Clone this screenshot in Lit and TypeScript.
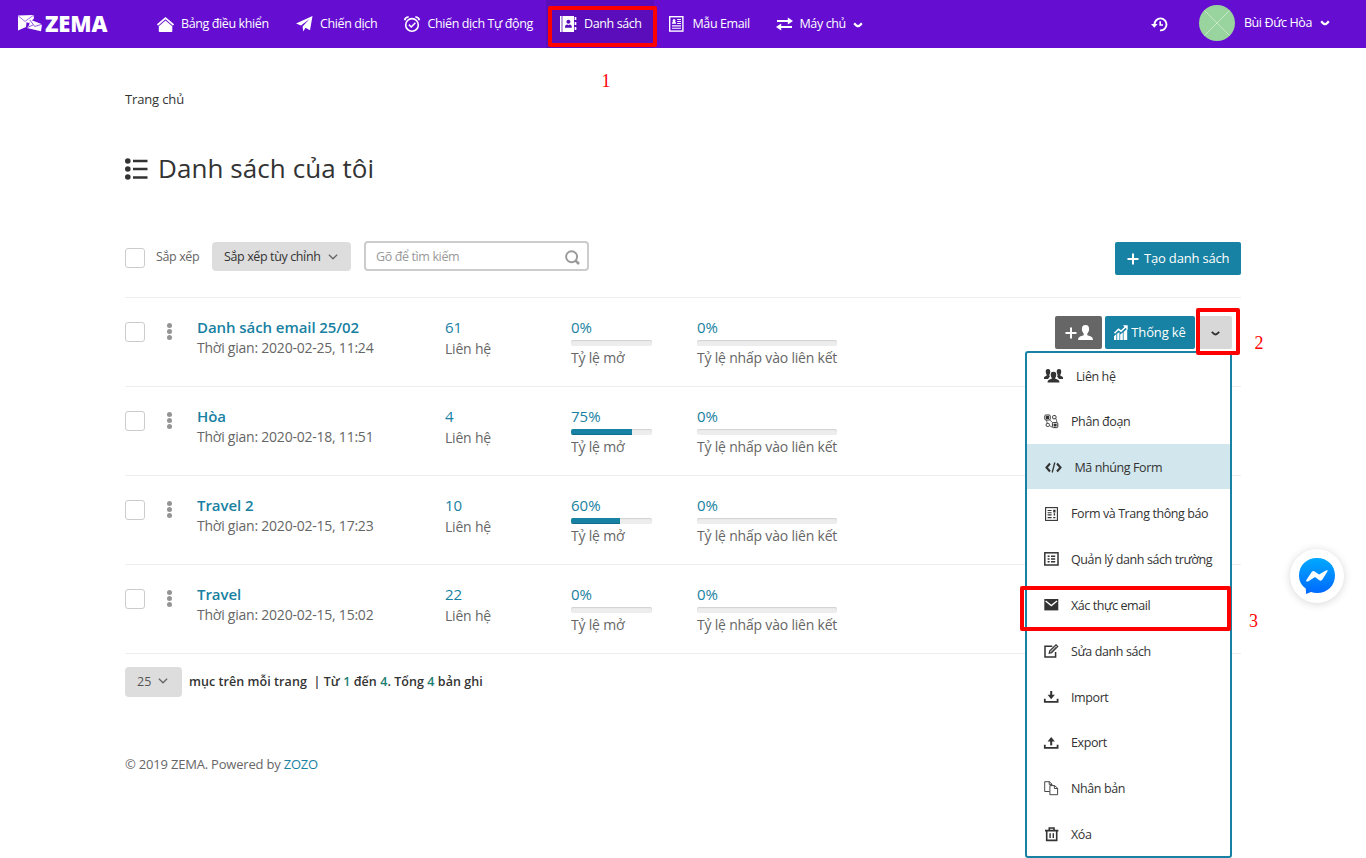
import { LitElement, html, css, svg } from "lit";
import { customElement, property } from "lit/decorators.js";
import { classMap } from "lit/directives/class-map.js";
import { styleMap } from "lit/directives/style-map.js";

const line = (d: string, w = 1.5) =>
  svg`<path d=${d} fill="none" stroke="currentColor" stroke-width=${w} />`;
const solid = (d: string) => svg`<path d=${d} fill="currentColor" fill-rule="evenodd" />`;

const glyphs: Record<string, { w: number; h: number; body: unknown }> = {
  logo: {
    w: 24, h: 17,
    body: svg`<path d="M0 .5 15.5 0 16 3.5 11 8 8.5 7.2 8 12 0 15.5Z" fill="#fff"/><path d="M.3 1 7 6.5 15.3.3" fill="none" stroke="#650dd1" stroke-width=".6"/><path d="M12 4.5 24 9.2 23 16.2 8.8 13 11.2 10Z" fill="#fff"/><path d="M11.8 5 16.7 11.4 24 9.3M9 12.6 15 10" fill="none" stroke="#650dd1" stroke-width=".7"/>`,
  },
  home: { w: 17, h: 15, body: svg`${solid("M8.5 3.6 15.3 9.3V14.2Q15.3 15 14.5 15H2.6Q1.8 15 1.8 14.2V9.3Z")}${line("M.5 8 8.5 1.2 16.5 8", 1.7)}` },
  plane: { w: 17, h: 16, body: solid("M16.5 0 14 14.2 9.5 11.7 7.2 15.5 6.6 10.6 13.5 3 5 9.6 0 7.6Z") },
  alarm: {
    w: 16, h: 16,
    body: svg`<circle cx="8" cy="8.9" r="6.3" fill="none" stroke="currentColor" stroke-width="1.6"/>${line("M4.9 8.6 7.3 11 11.4 6.7", 1.5)}${line("M.6 4.2Q1.3 1.2 4.6.9M15.4 4.2Q14.7 1.2 11.4.9", 1.6)}`,
  },
  book: {
    w: 17, h: 16,
    body: svg`${solid("M0 0H1.6V16H0ZM2.4 0H14V16H2.4ZM8.4 3.7a2 2 0 1 0 .01 0ZM5 11.7H11.8V10.4Q11.4 8.9 9.6 8.6L8.4 9.3 7.2 8.6Q5.4 8.9 5 10.4Z")}${solid("M14.6 1H16.3V4H14.6ZM14.6 6H16.3V9H14.6ZM14.6 11H16.3V14H14.6Z")}`,
  },
  news: {
    w: 15, h: 16,
    body: svg`<rect x=".7" y=".7" width="13.2" height="14.4" fill="none" stroke="currentColor" stroke-width="1.4"/>${line("M8.2 3.5H12M8.2 5.5H12M8.2 7.5H12M3 9.9H12M3 12.2H12", 1.1)}${solid("M3 7.8V6.6L4.2 5.9A1.5 1.5 0 1 1 5.9 5.9L7 6.6V7.8Z")}`,
  },
  swap: { w: 17, h: 14, body: svg`${line("M1 4H12.5M4.5 10H16", 2)}${solid("M11.8.4 17 4 11.8 7.6ZM5.2 6.4 0 10 5.2 13.6Z")}` },
  history: {
    w: 17, h: 15,
    body: svg`${line("M3.5 7.6A6 6 0 1 1 9 13.4", 1.9)}${line("M9.2 4.2V8H12", 1.6)}${solid("M0 7H6.6L3.3 10.8Z")}`,
  },
  caret: { w: 10, h: 6, body: line("M1.2 1.2Q3.6 4.2 5 4.2 6.4 4.2 8.8 1.2", 2.2) },
  down: { w: 9, h: 5, body: line("M.8.8Q3.4 3.5 4.5 3.5 5.6 3.5 8.2.8", 1.9) },
  thin: { w: 10, h: 6, body: line("M.9.8 5 4.8 9.1.8", 1.3) },
  list: {
    w: 23, h: 22,
    body: svg`<circle cx="2.8" cy="3" r="2.8" fill="currentColor"/><circle cx="2.8" cy="11" r="2.8" fill="currentColor"/><circle cx="2.8" cy="19" r="2.8" fill="currentColor"/>${line("M8 3H22.5M8 11H22.5M8 19.5H22.5", 2.4)}`,
  },
  search: { w: 15, h: 15, body: svg`<circle cx="6.6" cy="6.8" r="5.5" fill="none" stroke="currentColor" stroke-width="1.9"/>${line("M10.3 10.4 14 14", 2.6)}` },
  plus: { w: 12, h: 12, body: line("M6 .5V11.5M.5 6H11.5", 2) },
  person: { w: 15, h: 15, body: solid("M7.5 0C10.3 0 11.3 2 11.1 4.5 10.9 6.6 9.9 7.8 9.3 8.6V10.2L13 11.5Q15 12.2 15 15H0Q0 12.2 2 11.5L5.7 10.2V8.6C5.1 7.8 4.1 6.6 3.9 4.5 3.7 2 4.7 0 7.5 0Z") },
  stats: {
    w: 14, h: 15,
    body: svg`${solid("M0 11.2 2.4 9V15H0ZM3.2 8.6 5.4 7.2V15H3.2ZM6.2 9.4 8.8 7.4V15H6.2ZM9.6 7 13.2 3.8V15H9.6Z")}${line("M.5 8.2 4.5 4.3 7 6.2 12 1.5", 1.5)}${solid("M8.8.3H13.7V5Z")}`,
  },
  group: {
    w: 19, h: 14,
    body: svg`${solid("M4 0C6 0 6.5 1.5 6.2 3.4 6 4.7 5.4 5.3 5.3 6.5L6 7.3 4 10H0V9Q0 7.7 1 7.4L2.8 6.5C2.6 5.2 2 4.7 1.8 3.4 1.5 1.5 2 0 4 0ZM15 0C17 0 17.5 1.5 17.2 3.4 17 4.7 16.4 5.2 16.2 6.5L18 7.4Q19 7.7 19 9V10H15L13 7.3 13.7 6.5C13.6 5.3 13 4.7 12.8 3.4 12.5 1.5 13 0 15 0Z")}${solid("M9.5 2.8C12 2.8 12.5 4.5 12.2 6.4 12 7.8 11.2 8.5 11 9.6L14 10.7Q15.5 11.3 15.5 13.5H3.5Q3.5 11.3 5 10.7L8 9.6C7.8 8.5 7 7.8 6.8 6.4 6.5 4.5 7 2.8 9.5 2.8Z")}`,
  },
  segment: {
    w: 15, h: 15,
    body: svg`<g fill="none" stroke="currentColor" stroke-width="1"><rect x=".8" y="1" width="5.4" height="5" rx="1"/><rect x="8.6" y="1.6" width="3.4" height="3.2" rx="1"/><rect x="2.2" y="9.4" width="3.2" height="3" rx="1"/><rect x="8.4" y="8.6" width="5.4" height="5" rx="1"/><path d="M5.8 6 9 9M12 4.5 13 8.5M2.5 6 3.2 9.2M5.6 11.8 8.2 13.2" stroke-width=".7"/></g>${solid("M1.9 2.1H5V4.9H1.9ZM9.6 9.7H12.6V12.5H9.6Z")}`,
  },
  code: { w: 17, h: 11, body: svg`${line("M5 1.5 1.5 5.5 5 9.5M12 1.5 15.5 5.5 12 9.5", 2.1)}${line("M9.8.5 7.2 10.5", 1.3)}` },
  form: { w: 13, h: 14, body: svg`<rect x=".6" y=".6" width="11.8" height="12.8" fill="none" stroke="currentColor" stroke-width="1.1"/>${line("M2.6 3.5H6.6M2.6 5.7H6.6M2.6 7.9H6.6M2.6 10.6H6.6M8.2 10.6H10.4", 1.1)}${solid("M8.2 2.8H10.5V5.4H8.2ZM8.7 6.3H10.1V8.6H8.7Z")}` },
  fields: { w: 15, h: 14, body: svg`<rect x=".8" y=".8" width="13.2" height="12.2" fill="none" stroke="currentColor" stroke-width="1.5"/>${solid("M3.6 3.5H5.6V5.1H3.6ZM3.6 6.2H5.6V7.8H3.6ZM3.6 8.9H5.6V10.5H3.6Z")}${line("M7 4.3H11.2M7 7H11.2M7 9.7H11.2", 1.5)}` },
  mail: { w: 15, h: 12, body: svg`${solid("M.3 0H14.3V11.4H.3Z")}<path d="M1.6 2 7.3 6.6 13 2" fill="none" stroke="#fff" stroke-width="1.3"/>` },
  edit: { w: 15, h: 14, body: svg`${line("M8.3 2.2H1V13H11.6V8", 1.5)}${line("M5.2 9.3 5.8 6.8 12 .9 13.7 2.6 7.6 8.7Z", 1.2)}${line("M6.4 8.2 12 2.8", 0.8)}` },
  imp: { w: 15, h: 12, body: svg`${line("M.8 7.8V10.8H13.6V7.8", 1.8)}${line("M7.2 0V5", 2)}${solid("M3.6 3.8H10.8L7.2 8.2Z")}` },
  exp: { w: 15, h: 12, body: svg`${line("M.8 7.8V10.8H13.6V7.8", 1.8)}${line("M7.2 3V8.4", 2)}${solid("M3.6 4.4H10.8L7.2 0Z")}` },
  copy: { w: 15, h: 15, body: line("M5.5 10.5H.7V.7H5.3L8 3.2V4.3M5.2.7V3.4H8M5.9 4.6H10.6L13.6 7.2V13.7H5.9ZM10.4 4.6V7.5H13.6", 0.9) },
  trash: { w: 14, h: 15, body: svg`${line("M0 3.6H13.4M4.3 3.4V1H9V3.4M1.7 3.8V13.4H11.7V3.8", 1.6)}${line("M5.1 6.3V11M8.3 6.3V11", 1.4)}` },
};

@customElement("z-icon")
class ZIcon extends LitElement {
  @property() name = "";
  static styles = css`
    :host { display: inline-flex; flex: none; }
    svg { display: block; overflow: visible; }
  `;
  render() {
    const g = glyphs[this.name];
    return g
      ? html`<svg width=${g.w} height=${g.h} viewBox="0 0 ${g.w} ${g.h}">${g.body}</svg>`
      : null;
  }
}

@customElement("app-header")
class AppHeader extends LitElement {
  static styles = css`
    :host { display: flex; height: 48px; background: #650dd1; color: #fff; font-size: 12.5px; line-height: 46px; letter-spacing: -0.39px; }
    .brand { display: flex; align-items: center; width: 109px; padding: 0 18px; gap: 3px; }
    .brand z-icon { padding-bottom: 1px; }
    .word { padding-bottom: 1px; font: 800 22px/47px "Open Sans", sans-serif; letter-spacing: -0.1px; }
    .nav { display: grid; grid-template-columns: 139px 108px 154px 111px 107px 120px; }
    .item { display: flex; align-items: center; padding-left: 12px; white-space: nowrap; }
    .item z-icon:first-child { width: 24px; }
    .item.tight { padding-left: 11.5px; }
    .active { margin-right: 3px; padding-left: 14px; background: #5b0dbb; }
    .caret { margin-left: 7px; padding-top: 1px; }
    .user { display: flex; align-items: center; margin-left: auto; padding-right: 36px; line-height: 44px; }
    .user .caret { padding: 0 0 2px; margin-left: 8px; }
    .avatar { width: 36px; height: 36px; margin: 0 9px 2px 31px; }
    .who { padding-bottom: 2px; }
  `;
  render() {
    const items = [
      ["home", "Bảng điều khiển"],
      ["plane", "Chiến dịch"],
      ["alarm", "Chiến dịch Tự động"],
      ["book", "Danh sách"],
      ["news", "Mẫu Email"],
      ["swap", "Máy chủ"],
    ];
    return html`
      <div class="brand"><z-icon name="logo"></z-icon><span class="word">ZEMA</span></div>
      <nav class="nav">
        ${items.map(
          ([icon, label]) => html`<a class=${classMap({ item: true, active: icon === "book", tight: icon === "news" || icon === "swap" || icon === "alarm" })}>
            <z-icon name=${icon}></z-icon><span>${label}</span>
            ${icon === "swap" ? html`<z-icon class="caret" name="caret"></z-icon>` : null}
          </a>`
        )}
      </nav>
      <div class="user">
        <z-icon name="history"></z-icon>
        <svg class="avatar" viewBox="0 0 36 36">
          <circle cx="18" cy="18" r="18" fill="#99d49f" />
          <path d="M5.5 5.5 30.5 30.5M30.5 5.5 5.5 30.5" stroke="#c5e8c6" stroke-width="1" />
        </svg>
        <span class="who">Bùi Đức Hòa</span><z-icon class="caret" name="caret"></z-icon>
      </div>
    `;
  }
}

interface MailList { name: string; time: string; count: number; open: number; click: number; }

@customElement("list-row")
class ListRow extends LitElement {
  @property({ attribute: false }) data!: MailList;
  static styles = css`
    :host { display: grid; grid-template-columns: 41px 31px 248px 126px 126px 1fr; height: 88px; border-bottom: 1px solid #ededed; font-size: 14px; }
    .box { width: 18px; height: 18px; margin-top: 24px; border: 1px solid #ccc; border-radius: 3px; }
    .dots { display: flex; flex-direction: column; gap: 1px; padding: 24.5px 0 0 0.5px; }
    .dot { width: 5px; height: 5px; border-radius: 50%; background: #949494; }
    .col { padding-top: 18px; white-space: nowrap; }
    .name { color: #1881a2; font-size: 15px; line-height: 22px; font-weight: 600; letter-spacing: -0.07px; }
    .num { color: #1881a2; font-size: 15px; line-height: 22px; }
    .time { line-height: 19px; letter-spacing: -0.23px; }
    .sub { line-height: 21px; letter-spacing: -0.2px; }
    .bar { width: 81px; height: 6px; margin: 2px 0 0; border-radius: 2px; background: #ededed; box-shadow: inset 0 1px 1px rgba(0,0,0,.12); overflow: hidden; }
    .wide { width: 140px; }
    .fill { height: 100%; background: #1782a3; box-shadow: inset 0 -1px 0 rgba(0,0,0,.15); }
    .label { line-height: 24px; letter-spacing: -0.2px; }
  `;
  render() {
    const d = this.data;
    return html`
      <div class="box"></div>
      <div class="dots"><i class="dot"></i><i class="dot"></i><i class="dot"></i></div>
      <div class="col"><div class="name">${d.name}</div><div class="time">Thời gian: ${d.time}</div></div>
      <div class="col"><div class="num">${d.count}</div><div class="sub">Liên hệ</div></div>
      <div class="col"><div class="num">${d.open}%</div>
        <div class="bar"><div class="fill" style=${styleMap({ width: `${d.open}%` })}></div></div>
        <div class="label">Tỷ lệ mở</div></div>
      <div class="col"><div class="num">${d.click}%</div>
        <div class="bar wide"><div class="fill" style=${styleMap({ width: `${d.click}%` })}></div></div>
        <div class="label">Tỷ lệ nhấp vào liên kết</div></div>
    `;
  }
}

@customElement("action-menu")
class ActionMenu extends LitElement {
  static styles = css`
    :host { display: block; box-sizing: border-box; width: 207px; height: 507px; background: #fff; border: 2px solid #1782a3; border-radius: 3px; color: #333; font-size: 12.5px; letter-spacing: -0.4px; }
    .item { display: flex; box-sizing: border-box; height: 45px; align-items: center; padding: 2px 0 0 17px; margin-bottom: 0.87px; white-space: nowrap; }
    .item:first-child { height: 44.5px; }
    .item:last-child { margin-bottom: 0; }
    .hot { background: #d1e6ed; }
    .slot { display: flex; width: 27px; }
    .group .slot { width: 32px; }
    .code .slot { width: 30.5px; }
    .code z-icon { margin-left: 0.5px; }
    .form z-icon { margin-left: 1px; }
    .trash z-icon { margin-left: 0.5px; }
  `;
  render() {
    const items = [
      ["group", "Liên hệ"], ["segment", "Phân đoạn"], ["code", "Mã nhúng Form"],
      ["form", "Form và Trang thông báo"], ["fields", "Quản lý danh sách trường"],
      ["mail", "Xác thực email"], ["edit", "Sửa danh sách"], ["imp", "Import"],
      ["exp", "Export"], ["copy", "Nhân bản"], ["trash", "Xóa"],
    ];
    return html`${items.map(
      ([icon, label]) => html`<a class="item ${icon} ${icon === "code" ? "hot" : ""}">
        <span class="slot"><z-icon name=${icon}></z-icon></span><span>${label}</span></a>`
    )}`;
  }
}

@customElement("app-root")
class AppRoot extends LitElement {
  static styles = css`
    :host { display: block; position: relative; height: 858px; overflow: hidden; background: #fff; color: #666; font-family: "Open Sans", sans-serif; }
    .page { width: 1116px; padding-left: 125px; }
    .crumb { padding-top: 41px; font-size: 13px; line-height: 20px; letter-spacing: -0.14px; color: #333; }
    .heading { display: flex; align-items: center; gap: 10px; height: 40px; margin: 0; padding-top: 40px; color: #333; font-size: 26px; font-weight: 400; line-height: 40px; letter-spacing: 0.07px; }
    .heading span { padding-bottom: 2px; }
    .tools { display: flex; align-items: flex-start; height: 56px; padding-top: 52px; border-bottom: 1px solid #ededed; font-size: 12.5px; line-height: 30px; letter-spacing: -0.38px; white-space: nowrap; }
    .box { width: 18px; height: 18px; margin: 7px 11px 0 0; border: 1px solid #ccc; border-radius: 3px; }
    .sort { width: 56px; padding-top: 1px; }
    .select { display: flex; align-items: center; gap: 9px; box-sizing: border-box; height: 29px; margin-top: 1px; padding-left: 12px; background: #ddd; border-radius: 4px; color: #333; }
    .select z-icon { color: #666; }
    .by { width: 139px; }
    .by z-icon { margin-left: -1px; }
    .search { display: flex; align-items: center; justify-content: space-between; box-sizing: border-box; width: 225px; height: 30px; margin-left: 13px; padding: 1px 7px 0 10px; border: 2px solid #ccc; border-radius: 4px; color: #999; }
    .search z-icon { padding-top: 2px; }
    .create { display: flex; align-items: center; gap: 5px; box-sizing: border-box; width: 126px; height: 33px; margin: 1px 0 0 auto; padding-left: 12px; background: #1782a3; border-radius: 2px; color: #fff; font-size: 13px; letter-spacing: -0.18px; }
    .create span, .stat span { padding-bottom: 2px; }
    .pager { display: flex; padding-top: 13px; color: #333; font-size: 12.5px; line-height: 29px; font-weight: 600; letter-spacing: 0.06px; white-space: pre; }
    .size { width: 57px; height: 30px; margin: 0 7px 0 0; padding-bottom: 1px; gap: 8px; font-weight: 400; color: #555; }
    .size z-icon { margin: 0 0 2px -1px; }
    .n { color: #1a8073; }
    .foot { padding-top: 57px; font-size: 13px; line-height: 20px; letter-spacing: -0.2px; }
    .link { color: #1881a2; }
    .actions { position: absolute; left: 1055px; top: 316px; display: flex; gap: 3px; }
    .btn { display: flex; align-items: center; justify-content: center; gap: 3px; height: 33px; border-radius: 2px; color: #fff; font-size: 13px; letter-spacing: -0.15px; white-space: nowrap; }
    .add { width: 47px; background: #666; gap: 1px; }
    .stat { width: 90px; background: #1782a3; }
    .more { width: 34px; background: #d8d8d8; color: #333; }
    .more z-icon { padding-top: 1px; }
    action-menu { position: absolute; left: 1025px; top: 351px; }
    .mark { position: absolute; box-sizing: border-box; border: 4px solid #f00; border-radius: 2px; }
    .m1 { left: 548px; top: 6px; width: 109px; height: 41px; }
    .m2 { left: 1196px; top: 308px; width: 44px; height: 47px; }
    .m3 { left: 1020px; top: 586px; width: 211px; height: 45px; }
    .tag { position: absolute; color: #f00; font: 18px/20px "Liberation Serif", serif; }
    .t1 { left: 601.5px; top: 71px; }
    .t2 { left: 1254.5px; top: 333px; }
    .t3 { left: 1249px; top: 611px; }
    .chat { position: absolute; left: 1290px; top: 549px; width: 54px; height: 54px; border-radius: 50%; background: #fff; box-shadow: 0 1px 9px rgba(0,0,0,.16); }
    .chat svg { display: block; margin: 9px 9px; }
  `;
  private lists: MailList[] = [
    { name: "Danh sách email 25/02", time: "2020-02-25, 11:24", count: 61, open: 0, click: 0 },
    { name: "Hòa", time: "2020-02-18, 11:51", count: 4, open: 75, click: 0 },
    { name: "Travel 2", time: "2020-02-15, 17:23", count: 10, open: 60, click: 0 },
    { name: "Travel", time: "2020-02-15, 15:02", count: 22, open: 0, click: 0 },
  ];
  render() {
    return html`
      <app-header></app-header>
      <main class="page">
        <div class="crumb">Trang chủ</div>
        <h1 class="heading"><z-icon name="list"></z-icon><span>Danh sách của tôi</span></h1>
        <div class="tools">
          <div class="box"></div>
          <div class="sort">Sắp xếp</div>
          <div class="select by"><span>Sắp xếp tùy chỉnh</span><z-icon name="thin"></z-icon></div>
          <div class="search"><span>Gõ để tìm kiếm</span><z-icon name="search"></z-icon></div>
          <div class="create"><z-icon name="plus"></z-icon><span>Tạo danh sách</span></div>
        </div>
        ${this.lists.map((l) => html`<list-row .data=${l}></list-row>`)}
        <div class="pager"><div class="select size"><span>25</span><z-icon name="thin"></z-icon></div><span>mục trên mỗi trang  | Từ <span class="n">1</span> đến <span class="n">4</span>. Tổng <span class="n">4</span> bản ghi</span></div>
        <div class="foot">© 2019 ZEMA. Powered by <span class="link">ZOZO</span></div>
      </main>
      <div class="actions">
        <div class="btn add"><z-icon name="plus"></z-icon><z-icon name="person"></z-icon></div>
        <div class="btn stat"><z-icon name="stats"></z-icon><span>Thống kê</span></div>
        <div class="btn more"><z-icon name="down"></z-icon></div>
      </div>
      <action-menu></action-menu>
      <div class="mark m1"></div><div class="mark m2"></div><div class="mark m3"></div>
      <span class="tag t1">1</span><span class="tag t2">2</span><span class="tag t3">3</span>
      <div class="chat">
        <svg width="36" height="37" viewBox="0 0 36 37">
          <defs><linearGradient id="g" x1="0" y1="0" x2="0" y2="1"><stop offset="0" stop-color="#00a9ff" /><stop offset="1" stop-color="#0068ff" /></linearGradient></defs>
          <path d="M18 0C28.5 0 36 7.6 36 17.5S28.5 35 18 35Q14.8 35 12 34.1L7 36Q7 33 6.8 30.6C2.5 27.5 0 23 0 17.5 0 7.6 7.5 0 18 0Z" fill="url(#g)" />
          <path d="M7.2 22.2 12.7 13.9Q14 12.3 15.7 13.4L20 16.6 27 12.4Q29.2 11.5 28.4 13.4L23.4 21.6Q22.1 23.4 20.3 22.2L16 19 9 23.4Q6.7 24 7.2 22.2Z" fill="#fff" />
        </svg>
      </div>
    `;
  }
}
